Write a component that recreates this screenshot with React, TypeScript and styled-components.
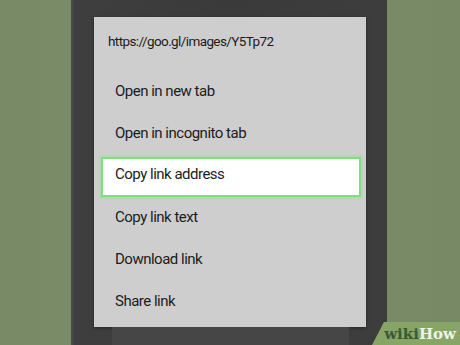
import React from 'react';
import styled, { createGlobalStyle } from 'styled-components';

const GlobalStyle = createGlobalStyle`
  html, body {
    margin: 0;
    padding: 0;
    background: #7a8b68;
  }
  body {
    font-family: Roboto, "Noto Sans", "Liberation Sans", sans-serif;
  }
`;

const items = [
  'Open in new tab',
  'Open in incognito tab',
  'Copy link address',
  'Copy link text',
  'Download link',
  'Share link',
];

const App = () => {
  return (
    <>
      <GlobalStyle />
      <Page>
        <Phone>
          <Dialog>
            <Url>https://goo.gl/images/Y5Tp72</Url>
            <Menu>
              {items.map((label, i) => (
                <Item key={label} $active={i === 2}>
                  {label}
                </Item>
              ))}
            </Menu>
          </Dialog>
          <ScreenBehind />
        </Phone>
        <Badge>
          <Wiki>wiki</Wiki>
          <How>How</How>
        </Badge>
      </Page>
    </>
  );
};

const Page = styled.div`
  position: relative;
  width: 460px;
  height: 345px;
  overflow: hidden;
  display: flex;
  padding-left: 71px;
  box-sizing: border-box;
  background: linear-gradient(90deg, #788a66 0%, #7b8c68 50%, #788966 100%);
`;

const Phone = styled.div`
  width: 316px;
  height: 345px;
  display: flex;
  flex-direction: column;
  padding: 17px 0 0 23px;
  box-sizing: border-box;
  background: linear-gradient(90deg, #4a4c4a 0px, #3d3e3d 4px, #3a3a3a 50%, #3c3d3c 100%);
`;

const Dialog = styled.div`
  width: 272px;
  height: 310px;
  flex-shrink: 0;
  box-sizing: border-box;
  padding: 14px 5px 5px 0;
  background: #cecece;
  box-shadow: 0 1px 3px rgba(0, 0, 0, 0.35);
  display: flex;
  flex-direction: column;
`;

const Url = styled.div`
  padding-left: 14px;
  height: 20px;
  line-height: 20px;
  font-size: 13.5px;
  letter-spacing: -0.6px;
  color: #1c1c1c;
  margin-bottom: 19px;
`;

const Menu = styled.div`
  display: flex;
  flex-direction: column;
`;

const Item = styled.div<{ $active?: boolean }>`
  height: 40px;
  margin: 1px 0 1px 7px;
  padding-left: 14px;
  padding-bottom: ${(p) => (p.$active ? '5px' : '0')};
  box-sizing: border-box;
  display: flex;
  align-items: center;
  font-size: 15px;
  letter-spacing: -0.5px;
  line-height: 1;
  color: #1c1c1c;
  background: ${(p) => (p.$active ? '#ffffff' : 'transparent')};
  box-shadow: ${(p) =>
    p.$active ? 'inset 0 0 0 2px #7fdf7f, 0 0 2px 1px rgba(140, 230, 140, 0.6)' : 'none'};
  position: relative;
  top: ${(p) => (p.$active ? '2px' : '0')};
`;

const ScreenBehind = styled.div`
  flex: 1;
  margin: 0 38px 0 18px;
  background: #464646;
`;

const Badge = styled.div`
  position: absolute;
  right: 0;
  bottom: 0;
  width: 88px;
  height: 23px;
  background: #87a567;
  clip-path: polygon(12px 0, 100% 0, 100% 100%, 0 100%);
  display: flex;
  align-items: flex-end;
  justify-content: flex-end;
  padding-right: 4px;
  padding-bottom: 3px;
  box-sizing: border-box;
  font-family: "DejaVu Serif", "Liberation Serif", serif;
  font-weight: bold;
  font-size: 15px;
  line-height: 1;
`;

const Wiki = styled.span`
  color: #3b5a34;
`;

const How = styled.span`
  color: #eef3e6;
`;

export default App;
